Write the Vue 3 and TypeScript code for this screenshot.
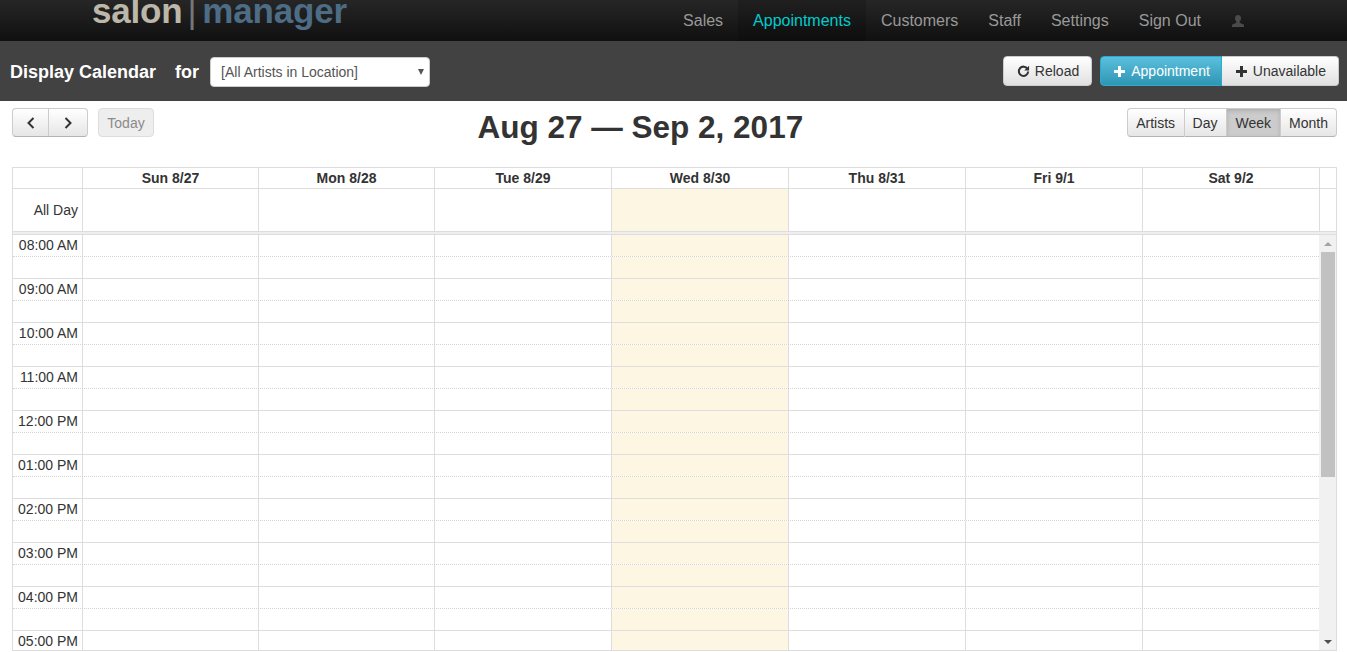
<script setup lang="ts">
const navItems = ['Sales', 'Appointments', 'Customers', 'Staff', 'Settings', 'Sign Out']
const days = ['Sun 8/27', 'Mon 8/28', 'Tue 8/29', 'Wed 8/30', 'Thu 8/31', 'Fri 9/1', 'Sat 9/2']
const todayIndex = 3
const hours = ['08:00 AM', '09:00 AM', '10:00 AM', '11:00 AM', '12:00 PM', '01:00 PM', '02:00 PM', '03:00 PM', '04:00 PM', '05:00 PM']
const views = ['Artists', 'Day', 'Week', 'Month']
</script>

<template>
  <div class="page">
    <header class="nav">
      <div class="logo"><span class="salon">salon</span><span class="bar">|</span><span class="manager">manager</span></div>
      <nav class="menu">
        <a v-for="n in navItems" :key="n" class="menu-item" :class="{ active: n === 'Appointments' }">{{ n }}</a>
        <a class="menu-item user">
          <svg width="14" height="14" viewBox="0 0 14 14"><path fill="#4b4b4b" d="M7 1c2 0 3 1.400 3 3.300 0 1.400-.6 2.700-1.400 3.400v1.100L13 10.700V13H1v-2.300l4.400-1.900V7.700C4.600 7 4 5.700 4 4.300 4 2.400 5 1 7 1z"/></svg>
        </a>
      </nav>
    </header>

    <section class="toolbar">
      <strong class="tool-title">Display Calendar</strong>
      <strong class="tool-for">for</strong>
      <div class="select-wrap">
        <select class="select"><option>[All Artists in Location]</option></select>
        <span class="caret"></span>
      </div>
      <div class="tool-actions">
        <button class="btn reload">
          <svg width="13" height="13" viewBox="0 0 14 14"><path fill="none" stroke="#333" stroke-width="2.200" d="M11.300 4.200A5 5 0 1 0 12 7"/><path fill="#333" d="M13 0.800v5.200H7.800z"/></svg>
          Reload
        </button>
        <div class="group">
          <button class="btn primary">
            <svg width="13" height="13" viewBox="0 0 13 13"><path fill="#fff" d="M5 1h3v4h4v3H8v4H5V8H1V5h4z"/></svg>
            Appointment
          </button>
          <button class="btn second">
            <svg width="13" height="13" viewBox="0 0 13 13"><path fill="#333" d="M5 1h3v4h4v3H8v4H5V8H1V5h4z"/></svg>
            Unavailable
          </button>
        </div>
      </div>
    </section>

    <section class="cal-head">
      <div class="cal-left">
        <div class="pager">
          <button class="pg">
            <svg width="10" height="14" viewBox="0 0 10 14"><path fill="none" stroke="#333" stroke-width="2" d="M7.500 2L2.500 7l5 5"/></svg>
          </button>
          <button class="pg">
            <svg width="10" height="14" viewBox="0 0 10 14"><path fill="none" stroke="#333" stroke-width="2" d="M2.500 2l5 5-5 5"/></svg>
          </button>
        </div>
        <button class="today-btn" disabled>Today</button>
      </div>
      <h2 class="title">Aug 27 — Sep 2, 2017</h2>
      <div class="views">
        <button v-for="v in views" :key="v" class="view" :class="{ on: v === 'Week' }">{{ v }}</button>
      </div>
    </section>

    <section class="cal">
      <div class="row head-row">
        <div class="gutter"></div>
        <div v-for="d in days" :key="d" class="cell head-cell">{{ d }}</div>
        <div class="tail"></div>
      </div>
      <div class="row allday-row">
        <div class="gutter allday-label">All Day</div>
        <div v-for="(d, i) in days" :key="d" class="cell" :class="{ 'is-today': i === todayIndex }"></div>
        <div class="tail"></div>
      </div>
      <div class="divider"></div>
      <div class="body">
        <div class="slots">
          <div v-for="h in hours" :key="h" class="hour">
            <div class="row half dotted">
              <div class="gutter time">{{ h }}</div>
              <div v-for="(d, i) in days" :key="d" class="cell" :class="{ 'is-today': i === todayIndex }"></div>
            </div>
            <div class="row half solid">
              <div class="gutter"></div>
              <div v-for="(d, i) in days" :key="d" class="cell" :class="{ 'is-today': i === todayIndex }"></div>
            </div>
          </div>
        </div>
        <div class="scrollbar">
          <span class="arrow up"></span>
          <div class="track"><div class="thumb"></div></div>
          <span class="arrow down"></span>
        </div>
      </div>
    </section>
  </div>
</template>

<style>
html, body { margin: 0; height: 100%; overflow: hidden; background: #fff; }
</style>

<style scoped>
.page {
  width: 1347px;
  height: 652px;
  overflow: hidden;
  font-family: "Liberation Sans", Arial, sans-serif;
  font-size: 14px;
  color: #333;
}

.nav {
  height: 41px;
  display: flex;
  justify-content: space-between;
  background: linear-gradient(#262626, #101010);
  overflow: hidden;
}
.logo {
  margin: -10px 0 0 92px;
  font-size: 35px;
  font-weight: bold;
  line-height: 41px;
  letter-spacing: -0.2px;
  white-space: nowrap;
}
.salon { color: #bcb7a8; }
.bar { color: #777; font-weight: normal; margin: 0 6px 0 5px; }
.manager { color: #4d6c85; }
.menu { display: flex; padding-right: 102px; }
.menu-item {
  padding: 0 15px;
  line-height: 41px;
  font-size: 16px;
  color: #999;
}
.menu-item.active { color: #0cc; background: rgba(0, 0, 0, 0.15); }
.menu-item.user { display: flex; align-items: center; padding: 0 0 0 15px; }

.toolbar {
  height: 60px;
  box-sizing: border-box;
  display: flex;
  align-items: center;
  padding: 0 8px 0 10px;
  background: #424242;
  color: #fff;
}
.tool-title { font-size: 18px; margin-top: 2px; }
.tool-for { font-size: 18px; margin: 2px 0 0 19px; }
.select-wrap { position: relative; margin: 2px 0 0 11px; }
.select {
  display: block;
  width: 220px;
  height: 30px;
  padding: 0 10px;
  border: 1px solid #ccc;
  border-radius: 4px;
  background: #fff;
  color: #555;
  font: 14px "Liberation Sans", Arial, sans-serif;
  appearance: none;
}
.caret {
  position: absolute;
  right: 6px;
  top: 12px;
  border-left: 3px solid transparent;
  border-right: 3px solid transparent;
  border-top: 6px solid #555;
}
.tool-actions { margin-left: auto; display: flex; gap: 8px; }
.btn {
  height: 30px;
  box-sizing: border-box;
  padding: 0 12px;
  display: flex;
  align-items: center;
  gap: 5px;
  border: 1px solid #ccc;
  border-radius: 4px;
  background: linear-gradient(#fff, #e0e0e0);
  color: #333;
  font: 14px "Liberation Sans", Arial, sans-serif;
}
.reload { padding-left: 13px; }
.group { display: flex; }
.primary {
  padding-right: 11px;
  background: linear-gradient(#5bc0de, #2f96b4);
  border-color: #2aabd2;
  color: #fff;
  border-radius: 4px 0 0 4px;
}
.second { padding-left: 13px; border-left: 0; border-radius: 0 4px 4px 0; }

.cal-head {
  height: 66px;
  box-sizing: border-box;
  padding: 7px 10px 0 12px;
  display: flex;
  justify-content: space-between;
  align-items: flex-start;
}
.cal-left { display: flex; gap: 10px; }
.pager { display: flex; }
.pg {
  width: 39px;
  height: 29px;
  padding: 0;
  display: flex;
  align-items: center;
  justify-content: center;
  border: 1px solid #ccc;
  border-bottom-color: #b3b3b3;
  background: linear-gradient(#fff, #e6e6e6);
}
.pg:first-child { width: 37px; border-radius: 4px 0 0 4px; border-right: 0; box-shadow: inset -1px 0 0 #ccc; }
.pg:last-child { border-left: 0; border-radius: 0 4px 4px 0; }
.today-btn {
  width: 56px;
  height: 29px;
  padding: 0;
  border: 1px solid #ddd;
  border-radius: 4px;
  background: #eee;
  color: #8a8a8a;
  font: 14px "Liberation Sans", Arial, sans-serif;
}
.title {
  margin: 0;
  font-size: 31.5px;
  font-weight: bold;
  line-height: 38px;
  color: #333;
}
.views { display: flex; }
.view {
  height: 29px;
  padding: 0 8px;
  border: 1px solid #ccc;
  border-left: 0;
  border-bottom-color: #b3b3b3;
  background: linear-gradient(#fff, #e6e6e6);
  color: #333;
  font: 14px "Liberation Sans", Arial, sans-serif;
}
.view:first-child { padding: 0 8.5px; border-left: 1px solid #ccc; border-radius: 4px 0 0 4px; }
.view:last-child { border-radius: 0 4px 4px 0; }
.view.on { padding: 0 9px; background: #ccc; box-shadow: inset 0 2px 4px rgba(0, 0, 0, 0.15); }

.cal {
  margin: 0 10px 0 12px;
  height: 484px;
  box-sizing: border-box;
  border: 1px solid #ddd;
  display: flex;
  flex-direction: column;
}
.row {
  display: grid;
  grid-template-columns: 69px 176px 176px 177px 177px 177px 177px 177px 1fr;
}
.cell { border-left: 1px solid #ddd; box-sizing: border-box; }
.tail { border-left: 1px solid #ddd; }
.head-row { height: 20px; border-bottom: 1px solid #ddd; }
.head-cell { text-align: center; font-weight: bold; line-height: 20px; }
.allday-row { height: 42px; border-bottom: 1px solid #ddd; }
.allday-label { line-height: 42px; text-align: right; padding-right: 4px; }
.cell.is-today { background: #fdf6e3; }
.divider { height: 2px; background: #eee; border-bottom: 1px solid #ddd; flex: none; }
.body { flex: 1; min-height: 0; display: flex; overflow: hidden; }
.slots { flex: 1; min-width: 0; }
.half { height: 22px; box-sizing: border-box; }
.dotted { border-bottom: 1px dotted #d4d4d4; }
.solid { border-bottom: 1px solid #ddd; }
.time { line-height: 20px; text-align: right; padding-right: 4px; }
.scrollbar {
  width: 17px;
  background: #f1f1f1;
  display: flex;
  flex-direction: column;
  align-items: center;
  flex: none;
}
.arrow {
  flex: none;
  width: 0;
  height: 0;
  border-left: 4px solid transparent;
  border-right: 4px solid transparent;
}
.arrow.up { margin: 7px 0 6px; border-bottom: 4px solid #a3a3a3; }
.arrow.down { margin: 6px 0 6px; border-top: 4px solid #505050; }
.track { flex: 1; width: 100%; }
.thumb { width: 14px; margin-left: 2px; height: 225px; background: #c1c1c1; }
</style>
